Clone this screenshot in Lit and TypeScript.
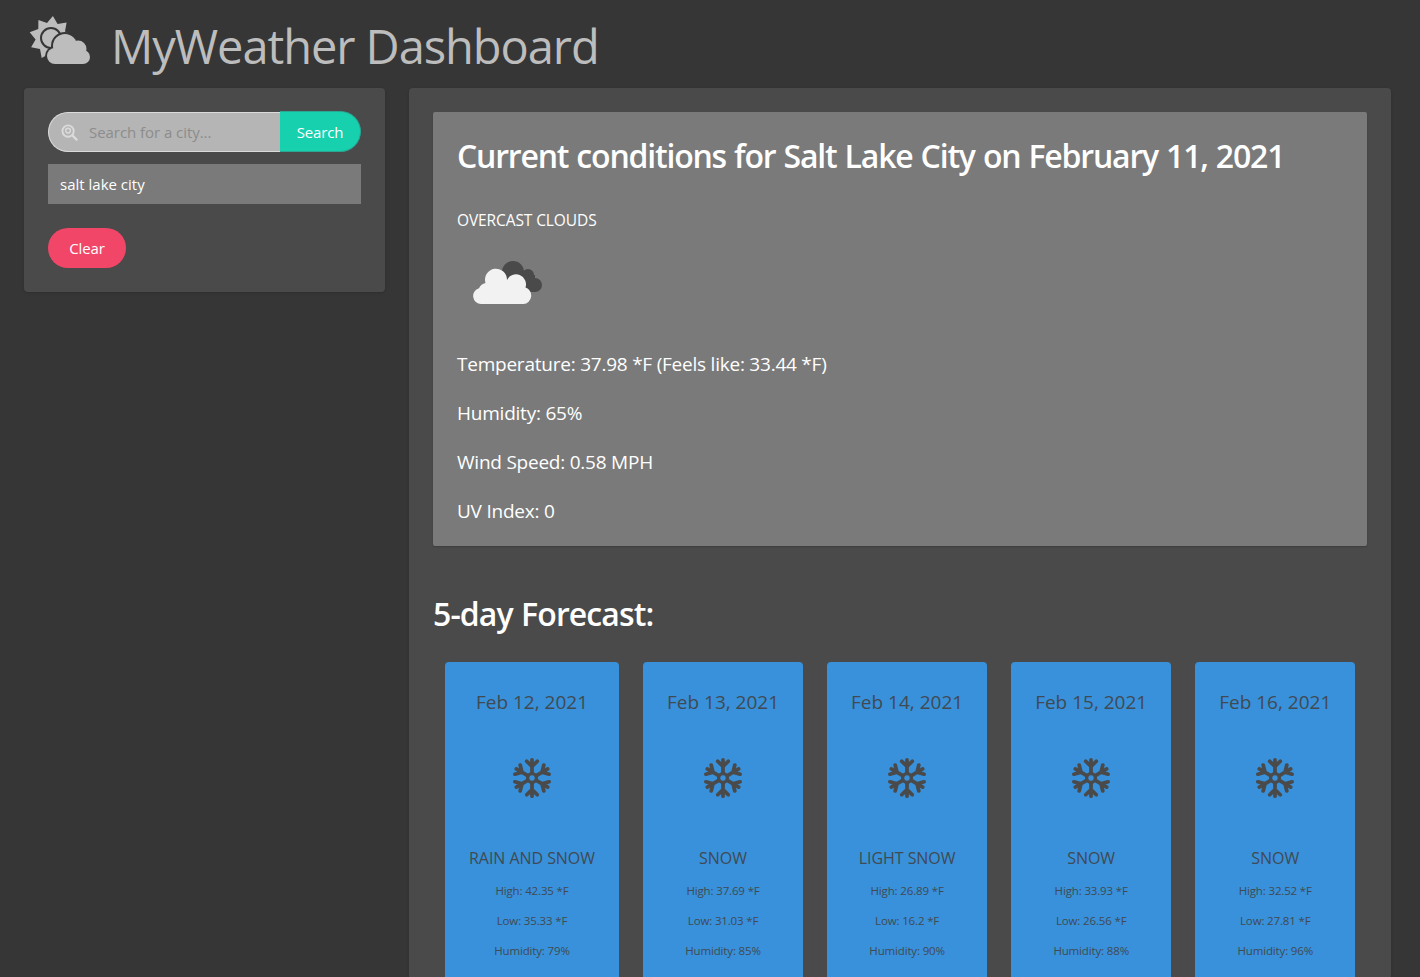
import { LitElement, css, html, svg } from "lit";
import { customElement } from "lit/decorators.js";

const forecast = [
  { date: "Feb 12, 2021", desc: "RAIN AND SNOW", high: "42.35", low: "35.33", humidity: "79" },
  { date: "Feb 13, 2021", desc: "SNOW", high: "37.69", low: "31.03", humidity: "85" },
  { date: "Feb 14, 2021", desc: "LIGHT SNOW", high: "26.89", low: "16.2", humidity: "90" },
  { date: "Feb 15, 2021", desc: "SNOW", high: "33.93", low: "26.56", humidity: "88" },
  { date: "Feb 16, 2021", desc: "SNOW", high: "32.52", low: "27.81", humidity: "96" },
];

const snowArm = (deg: number) => svg`
  <g transform="rotate(${deg} 20 20)">
    <path d="M20 15.5V3.5M20 9.5L15.2 4.8M20 9.5L24.8 4.8" />
  </g>`;

const snowflake = html`<svg class="snow" viewBox="0 0 40 40" fill="none" stroke="#4a4a4a" stroke-width="3.4" stroke-linecap="round">
  ${[0, 60, 120, 180, 240, 300].map(snowArm)}
  <circle cx="20" cy="20" r="4" stroke-width="3" />
</svg>`;

const sunPoints = () => {
  const pts: string[] = [];
  for (let i = 0; i < 18; i++) {
    const r = i % 2 === 0 ? 22 : 15.5;
    const a = (i * 20 - 85) * (Math.PI / 180);
    pts.push(`${(22 + r * Math.cos(a)).toFixed(1)},${(24 + r * Math.sin(a)).toFixed(1)}`);
  }
  return pts.join(" ");
};

// cloud lobes, drawn once as an outline and once as the fill
const logoCloud = svg`
  <circle cx="26" cy="42" r="8" />
  <circle cx="36" cy="32" r="12" />
  <circle cx="49" cy="35" r="8.500" />
  <circle cx="54" cy="43" r="7" />
  <rect x="26" y="36" width="28" height="14" />`;

const logo = html`<svg class="logo" viewBox="0 0 62 50">
  <polygon points=${sunPoints()} fill="#bdbdbd" />
  <circle cx="22" cy="24" r="10" fill="#bdbdbd" stroke="#363636" stroke-width="2" />
  <g fill="#363636" stroke="#363636" stroke-width="4">${logoCloud}</g>
  <g fill="#bdbdbd">${logoCloud}</g>
</svg>`;

const cloudIcon = html`<svg class="cloud" viewBox="0 0 70 44">
  <g fill="#4a4a4a">
    <circle cx="40" cy="11" r="11" />
    <circle cx="55" cy="14" r="6" />
    <circle cx="62" cy="24" r="7" />
    <rect x="40" y="14" width="22" height="17" />
  </g>
  <path
    d="M8 43A8 8 0 0 1 6 27.300Q8 23 12.500 22A11 11 0 1 1 34 19A10 10 0 0 1 52.500 26.500A8.500 8.500 0 0 1 50.500 43Z"
    fill="#f2f2f2"
  />
</svg>`;

const searchIcon = html`<svg class="search-icon" viewBox="0 0 18 18" fill="none" stroke="#dbdbdb">
  <circle cx="7.500" cy="7.500" r="6" stroke-width="2" />
  <circle cx="7.500" cy="7" r="2.500" stroke-width="1.500" />
  <path d="M12 12l4.500 4.500" stroke-width="2.400" stroke-linecap="round" />
</svg>`;

@customElement("app-root")
export class AppRoot extends LitElement {
  static styles = css`
    :host {
      display: block;
      height: 100vh;
      overflow: hidden;
      background: #363636;
      color: #fff;
      font-family: "Open Sans", "Noto Sans", sans-serif;
      font-size: 16px;
    }

    header {
      height: 88px;
      box-sizing: border-box;
      padding: 14px 0 0 29px;
      display: flex;
      align-items: flex-start;
      gap: 20px;
    }

    .logo {
      width: 62px;
      height: 50px;
      flex: none;
    }

    h1 {
      margin: 0;
      font-size: 47px;
      line-height: 64px;
      font-weight: 400;
      color: #bdbdbd;
      letter-spacing: -1.05px;
    }

    .layout {
      display: grid;
      grid-template-columns: 361px 982px;
      gap: 24px;
      padding-left: 24px;
      align-items: start;
    }

    .panel {
      background: #4a4a4a;
      border-radius: 4px;
      padding: 24px;
      box-shadow: 0 1px 3px rgba(0, 0, 0, 0.15);
    }

    .search {
      display: flex;
      height: 40px;
      font-size: 15px;
    }

    .input {
      width: 232px;
      box-sizing: border-box;
      display: flex;
      align-items: center;
      gap: 11px;
      padding-left: 12px;
      background: #b5b5b5;
      border: 1px solid #dbdbdb;
      border-right: none;
      border-radius: 20px 0 0 20px;
      color: #8c8c8c;
      letter-spacing: -0.05px;
    }

    .search-btn {
      width: 81px;
      height: 41px;
      margin-top: -1px;
      display: flex;
      align-items: center;
      justify-content: center;
      box-sizing: border-box;
      background: #17d0ae;
      border: 1px solid #2aa692;
      border-left: none;
      border-radius: 0 21px 21px 0;
      letter-spacing: -0.2px;
    }

    .search-icon {
      width: 17px;
      height: 17px;
      flex: none;
    }

    .history {
      margin-top: 12px;
      height: 40px;
      box-sizing: border-box;
      display: flex;
      align-items: center;
      padding-left: 12px;
      background: #7a7a7a;
      font-size: 15px;
    }

    .clear {
      margin-top: 24px;
      width: 78px;
      height: 40px;
      display: flex;
      align-items: center;
      justify-content: center;
      background: #f14668;
      border-radius: 20px;
      font-size: 15px;
      letter-spacing: -0.1px;
    }

    .current {
      background: #7a7a7a;
      border-radius: 2px;
      padding: 24px;
      height: 434px;
      box-sizing: border-box;
      box-shadow: 0 1px 2px rgba(0, 0, 0, 0.2);
    }

    h2 {
      margin: 0;
      font-size: 32px;
      line-height: 40px;
      font-weight: 600;
      letter-spacing: -1.2px;
      word-spacing: 1px;
    }

    .overcast {
      margin: 32px 0 0;
      font-size: 15.500px;
      line-height: 24px;
      letter-spacing: -0.1px;
    }

    .cloud {
      display: block;
      width: 70px;
      height: 44px;
      margin: 29px 0 0 16px;
    }

    .stats {
      margin-top: 35px;
    }

    .stat {
      margin: 0;
      height: 49px;
      font-size: 19px;
      line-height: 49px;
      letter-spacing: -0.23px;
    }

    .forecast-title {
      margin-top: 48px;
      letter-spacing: -0.9px;
    }

    .cards {
      margin-top: 28px;
      padding: 0 12px;
      display: flex;
      gap: 24px;
    }

    .card {
      flex: none;
      min-width: 160px;
      box-sizing: border-box;
      padding: 24px;
      height: 400px;
      background: #3891da;
      border-radius: 4px;
      color: #414a52;
      text-align: center;
      white-space: nowrap;
    }

    .date {
      font-size: 19px;
      line-height: 32px;
    }

    .snow {
      display: block;
      width: 44px;
      height: 44px;
      margin: 38px auto 0;
    }

    .desc {
      margin-top: 46px;
      font-size: 16px;
      line-height: 24px;
      letter-spacing: -0.05px;
    }

    .small {
      font-size: 11.500px;
      line-height: 30px;
      letter-spacing: -0.15px;
    }

    .desc + .small {
      margin-top: 6px;
    }
  `;

  render() {
    return html`
      <header>${logo}<h1>MyWeather Dashboard</h1></header>
      <div class="layout">
        <aside class="panel">
          <div class="search">
            <div class="input">${searchIcon}<span>Search for a city...</span></div>
            <div class="search-btn">Search</div>
          </div>
          <div class="history">salt lake city</div>
          <div class="clear">Clear</div>
        </aside>
        <main class="panel">
          <section class="current">
            <h2>Current conditions for Salt Lake City on February 11, 2021</h2>
            <p class="overcast">OVERCAST CLOUDS</p>
            ${cloudIcon}
            <div class="stats">
              <p class="stat">Temperature: 37.98 *F (Feels like: 33.44 *F)</p>
              <p class="stat">Humidity: 65%</p>
              <p class="stat">Wind Speed: 0.58 MPH</p>
              <p class="stat">UV Index: 0</p>
            </div>
          </section>
          <h2 class="forecast-title">5-day Forecast:</h2>
          <div class="cards">
            ${forecast.map(
              (f) => html`<article class="card">
                <div class="date">${f.date}</div>
                ${snowflake}
                <div class="desc">${f.desc}</div>
                <div class="small">High: ${f.high} *F</div>
                <div class="small">Low: ${f.low} *F</div>
                <div class="small">Humidity: ${f.humidity}%</div>
              </article>`,
            )}
          </div>
        </main>
      </div>
    `;
  }
}
